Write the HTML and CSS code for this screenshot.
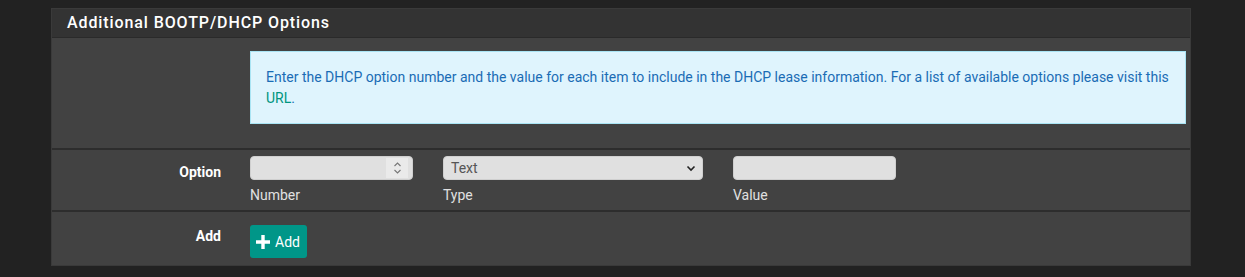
FILE: index.html
```html
<!DOCTYPE html>
<html lang="en">
<head>
  <meta charset="UTF-8" />
  <title>Additional BOOTP/DHCP Options</title>
  <link rel="stylesheet" href="styles.css">
</head>
<body>
  <div class="panel">
    <div class="panel-heading">Additional BOOTP/DHCP Options</div>
    <div class="panel-body">
      <div class="form-row info-row">
        <div class="form-label"></div>
        <div class="form-content">
          <div class="alert-info">
            Enter the DHCP option number and the value for each item to include in the DHCP lease information. For a list of available options please visit this <a href="#">URL</a>.
          </div>
        </div>
      </div>

      <div class="form-row option-row">
        <div class="form-label">Option</div>
        <div class="form-content fields">
          <div class="field field-number">
            <div class="input number-input">
              <span class="spinner">
                <svg width="9" height="14" viewBox="0 0 9 14"><path d="M1.5 5 L4.5 2 L7.5 5 M1.5 9 L4.5 12 L7.5 9" fill="none" stroke="#777" stroke-width="1.1"/></svg>
              </span>
            </div>
            <span class="help">Number</span>
          </div>
          <div class="field field-type">
            <div class="input select-input">
              <span>Text</span>
              <svg width="10" height="7" viewBox="0 0 10 7"><path d="M1.5 1.5 L5 5 L8.5 1.5" fill="none" stroke="#222" stroke-width="1.6"/></svg>
            </div>
            <span class="help">Type</span>
          </div>
          <div class="field field-value">
            <div class="input"></div>
            <span class="help">Value</span>
          </div>
        </div>
      </div>

      <div class="form-row add-row">
        <div class="form-label">Add</div>
        <div class="form-content">
          <button class="btn-add">
            <svg width="16" height="16" viewBox="0 0 16 16"><path d="M8 1 V15 M1 8 H15" stroke="#fff" stroke-width="3.4"/></svg>
            Add
          </button>
        </div>
      </div>
    </div>
  </div>
</body>
</html>
```

FILE: styles.css
```css
* {
  box-sizing: border-box;
}

html, body {
  margin: 0;
  padding: 0;
  background: #222222;
  font-family: 'Roboto', 'Liberation Sans', sans-serif;
  color: #e0e0e0;
}

body {
  padding: 8px 54px 0 51px;
}

.panel {
  width: 1140px;
  border: 1px solid #3a3a3a;
  background: #424242;
}

.panel-heading {
  height: 29px;
  background: #333333;
  border-bottom: 1px solid #2a2a2a;
  padding: 4px 0 0 15px;
  font-size: 16px;
  font-weight: 500;
  letter-spacing: 0.9px;
  color: #ffffff;
}

.form-row {
  display: flex;
  border-bottom: 2px solid #2d2d2d;
}

.form-row:last-child {
  border-bottom: none;
}

.form-label {
  width: 198px;
  flex-shrink: 0;
  text-align: right;
  padding-right: 29px;
  font-size: 14px;
  font-weight: 700;
  color: #ffffff;
}

.form-content {
  flex: 1;
}

.info-row {
  height: 112px;
  padding-top: 13px;
}

.alert-info {
  width: 936px;
  height: 73px;
  background: #dff4fd;
  border: 1px solid #a9e4f4;
  padding: 15px 15px 14px;
  font-size: 14px;
  line-height: 21px;
  color: #1a6cb5;
}

.alert-info a {
  color: #00957f;
  text-decoration: none;
}

.option-row {
  height: 62px;
  padding-top: 6px;
}

.option-row .form-label {
  padding-top: 8px;
}

.fields {
  display: flex;
  gap: 30px;
}

.field {
  display: flex;
  flex-direction: column;
}

.field-number, .field-value {
  width: 163px;
}

.field-type {
  width: 260px;
}

.input {
  height: 24px;
  background: #e0e0e0;
  border: 1px solid #cfcfcf;
  border-radius: 4px;
  display: flex;
  align-items: center;
}

.number-input {
  justify-content: flex-end;
  padding-right: 4px;
}

.spinner {
  width: 22px;
  height: 20px;
  background: #eaeaea;
  display: flex;
  align-items: center;
  justify-content: center;
}

.select-input {
  justify-content: space-between;
  padding: 0 6px 0 7px;
  font-size: 14px;
  color: #555555;
}

.help {
  margin-top: 7px;
  font-size: 14px;
  color: #e0e0e0;
}

.add-row {
  height: 53px;
  padding-top: 13px;
}

.add-row .form-label {
  padding-top: 3px;
}

.btn-add {
  height: 33px;
  width: 57px;
  background: #009688;
  border: none;
  border-radius: 3px;
  color: #ffffff;
  font-family: inherit;
  font-size: 14px;
  padding: 0 0 0 5px;
  display: flex;
  align-items: center;
  gap: 4px;
}
```
